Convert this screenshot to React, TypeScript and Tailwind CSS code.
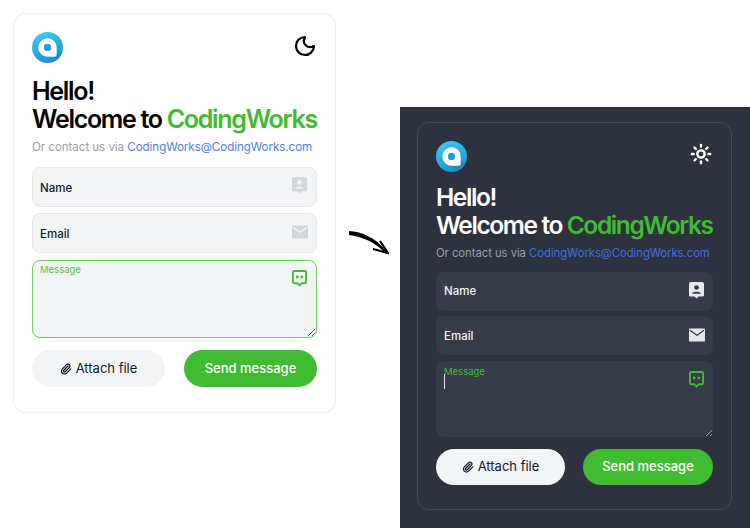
import { Moon, Paperclip, Sun } from 'lucide-react';

function Logo({ id, className }: { id: string; className: string }) {
  return (
    <svg viewBox="0 0 32 32" className={className}>
      <defs>
        <linearGradient id={id} x1="0.3" y1="0" x2="0.7" y2="1">
          <stop offset="0" stopColor="#3cc8f0" />
          <stop offset="1" stopColor="#1a90cf" />
        </linearGradient>
      </defs>
      <circle cx="16" cy="16" r="16" fill={`url(#${id})`} />
      <path d="M24 22 L31 22 A16 16 0 0 1 22 31 L15 25 Z" fill="#1685c3" opacity="0.55" />
      <path
        fillRule="evenodd"
        fill="#ffffff"
        d="M16 6.5 A9.5 9.5 0 0 1 25.5 16 V23.5 A2 2 0 0 1 23.5 25.5 H16 A9.5 9.5 0 0 1 16 6.5 Z M16 12.4 A3.6 3.6 0 1 0 16 19.6 A3.6 3.6 0 1 0 16 12.4 Z"
      />
      <circle cx="16" cy="16" r="3.6" fill="#1f9bd7" />
    </svg>
  );
}

function ContactIcon({ className }: { className: string }) {
  return (
    <svg viewBox="0 0 16 18" className={className}>
      <path d="M2 0 H14 A2 2 0 0 1 16 2 V14 A1.5 1.5 0 0 1 14.5 15.5 H10 L8 17.5 L6 15.5 H1.5 A1.5 1.5 0 0 1 0 14 V2 A2 2 0 0 1 2 0 Z" fill="currentColor" />
      <circle cx="8" cy="5.8" r="2.5" className="fill-[var(--cut)]" />
      <path d="M3.2 12.4 C3.6 9.8 12.4 9.8 12.8 12.4 Z" className="fill-[var(--cut)]" />
    </svg>
  );
}

function MailIcon({ className }: { className: string }) {
  return (
    <svg viewBox="0 0 17 14" className={className}>
      <rect width="17" height="14" rx="1" fill="currentColor" />
      <path d="M1 2 L8.5 7.2 L16 2" fill="none" strokeWidth="1.3" className="stroke-[var(--cut)]" />
    </svg>
  );
}

function ChatIcon({ className }: { className: string }) {
  return (
    <svg viewBox="0 0 16 18" className={className}>
      <path d="M2.5 1 H13.5 A1.5 1.5 0 0 1 15 2.5 V12.5 A1.5 1.5 0 0 1 13.5 14 H10.4 L8 16.4 L5.6 14 H2.5 A1.5 1.5 0 0 1 1 12.5 V2.5 A1.5 1.5 0 0 1 2.5 1 Z" fill="none" stroke="currentColor" strokeWidth="2" />
      <circle cx="5.6" cy="7.4" r="1.5" fill="currentColor" />
      <circle cx="10.4" cy="7.4" r="1.5" fill="currentColor" />
    </svg>
  );
}

export default function App() {
  return (
    <div className="flex h-[528px] w-[750px] overflow-hidden bg-white font-['Inter','Liberation_Sans',sans-serif]">
      {/* Light card */}
      <div className="ml-[13px] mt-[13px] h-[400px] w-[323px] shrink-0 rounded-[13px] border border-gray-200/70 bg-white px-[18px] pt-[18px]">
        <div className="flex items-center justify-between">
          <Logo id="logo-light" className="h-[31px] w-[31px]" />
          <Moon className="mb-[4px] h-[24px] w-[24px] text-black" strokeWidth={2.2} />
        </div>
        <h1 className="mt-[14px] whitespace-nowrap text-[25px] font-semibold leading-[28px] tracking-[-0.052em] text-black">
          Hello!
          <br />
          Welcome to <span className="text-[#41bb31]">CodingWorks</span>
        </h1>
        <p className="mt-[5px] whitespace-nowrap text-[11.6px] leading-[18px] tracking-[-0.005em] text-gray-400">
          Or contact us via <span className="text-[#4f7df5]">CodingWorks@CodingWorks.com</span>
        </p>
        <div className="mt-[11px] flex flex-col gap-[6px] [--cut:#f3f4f6]">
          <label className="flex h-[40px] items-center justify-between rounded-[8px] border border-gray-200 bg-[#f3f4f6] pl-[7px] pr-[9px]">
            <input placeholder="Name" className="w-[200px] bg-transparent pt-[3px] text-[11.5px] font-medium text-gray-900 outline-none placeholder:text-gray-900" />
            <ContactIcon className="mb-[3px] h-[17px] w-[15px] text-gray-300" />
          </label>
          <label className="flex h-[40px] items-center justify-between rounded-[8px] border border-gray-200 bg-[#f3f4f6] pl-[7px] pr-[8px]">
            <input placeholder="Email" className="w-[200px] bg-transparent pt-[3px] text-[11.5px] font-medium text-gray-900 outline-none placeholder:text-gray-900" />
            <MailIcon className="mb-[2px] h-[14px] w-[16px] text-gray-300" />
          </label>
          <div className="relative mt-px flex">
            <textarea placeholder="Message" className="h-[78px] w-full resize-y rounded-[8px] border border-[#6fcf62] bg-[#f3f4f6] px-[7px] py-[2px] text-[9.5px] leading-[14px] outline-none placeholder:text-[#56c545]" />
            <ChatIcon className="absolute right-[10px] top-[10px] h-[17px] w-[15px] text-[#41bb31]" />
          </div>
        </div>
        <div className="mt-[12px] flex justify-between">
          <button className="flex h-[37px] w-[133px] items-center justify-center gap-[4px] rounded-full bg-[#f3f4f6] text-[13px] font-normal text-gray-900">
            <Paperclip className="h-[12px] w-[12px]" strokeWidth={2.5} />
            Attach file
          </button>
          <button className="h-[37px] w-[133px] rounded-full bg-[#41bb31] text-[13px] font-medium text-white">Send message</button>
        </div>
      </div>

      {/* Arrow between the two themes */}
      <div className="flex w-[64px] shrink-0 justify-center pt-[229px]">
        <svg viewBox="0 0 42 28" className="h-[28px] w-[42px]">
          <path d="M2 2 C15 3 28 8 39 22 L37.6 23.4 C27 12 15 8 2 6 Z" fill="#000" />
          <path d="M33 12 L41 24 L26 20" fill="none" stroke="#000" strokeWidth="2.2" />
        </svg>
      </div>

      {/* Dark panel */}
      <div className="mt-[107px] h-[421px] w-[350px] shrink-0 bg-[#2d323e] pl-[17px] pt-[15px]">
        <div className="h-[388px] w-[315px] rounded-[12px] border border-[#434855] px-[18px] pt-[18px]">
          <div className="flex items-center justify-between pr-[1px]">
            <Logo id="logo-dark" className="h-[31px] w-[31px]" />
            <Sun className="mb-[6px] h-[22px] w-[22px] text-white" strokeWidth={2.6} />
          </div>
          <h1 className="mt-[11px] whitespace-nowrap text-[24.5px] font-semibold leading-[28px] tracking-[-0.057em] text-white">
            Hello!
            <br />
            Welcome to <span className="text-[#41bb31]">CodingWorks</span>
          </h1>
          <p className="mt-[5px] whitespace-nowrap text-[11.33px] leading-[18px] tracking-[-0.005em] text-gray-400">
            Or contact us via <span className="text-[#3b71e8]">CodingWorks@CodingWorks.com</span>
          </p>
          <div className="mt-[10px] flex flex-col gap-[5px] [--cut:#373c4a]">
            <label className="flex h-[39px] items-center justify-between rounded-[8px] bg-[#373c4a] pl-[8px] pr-[9px]">
              <input placeholder="Name" className="w-[200px] bg-transparent text-[11.5px] font-medium text-white outline-none placeholder:text-gray-100" />
              <ContactIcon className="mb-[3px] h-[17px] w-[15px] text-gray-200" />
            </label>
            <label className="flex h-[39px] items-center justify-between rounded-[8px] bg-[#373c4a] pl-[8px] pr-[8px]">
              <input placeholder="Email" className="w-[200px] bg-transparent pt-[2px] text-[11.5px] font-medium text-white outline-none placeholder:text-gray-100" />
              <MailIcon className="mb-[2px] h-[14px] w-[16px] text-gray-200" />
            </label>
            <div className="relative mt-px flex">
              <textarea placeholder="Message" className="h-[76px] w-full resize-y rounded-[8px] bg-[#373c4a] px-[8px] py-[4px] text-[9.5px] leading-[14px] outline-none [color-scheme:dark] placeholder:text-[#41bb31]" />
              <span className="absolute left-[8px] top-[13px] h-[15px] w-px bg-gray-200" />
              <ChatIcon className="absolute right-[9px] top-[10px] h-[17px] w-[15px] text-[#41bb31]" />
            </div>
          </div>
          <div className="mt-[12px] flex justify-between">
            <button className="flex h-[36px] w-[129px] items-center justify-center gap-[4px] rounded-full bg-[#f3f4f6] text-[13px] font-normal text-gray-900">
              <Paperclip className="h-[12px] w-[12px]" strokeWidth={2.5} />
              Attach file
            </button>
            <button className="h-[36px] w-[130px] rounded-full bg-[#41bb31] text-[13px] font-medium text-white">Send message</button>
          </div>
        </div>
      </div>
    </div>
  );
}
